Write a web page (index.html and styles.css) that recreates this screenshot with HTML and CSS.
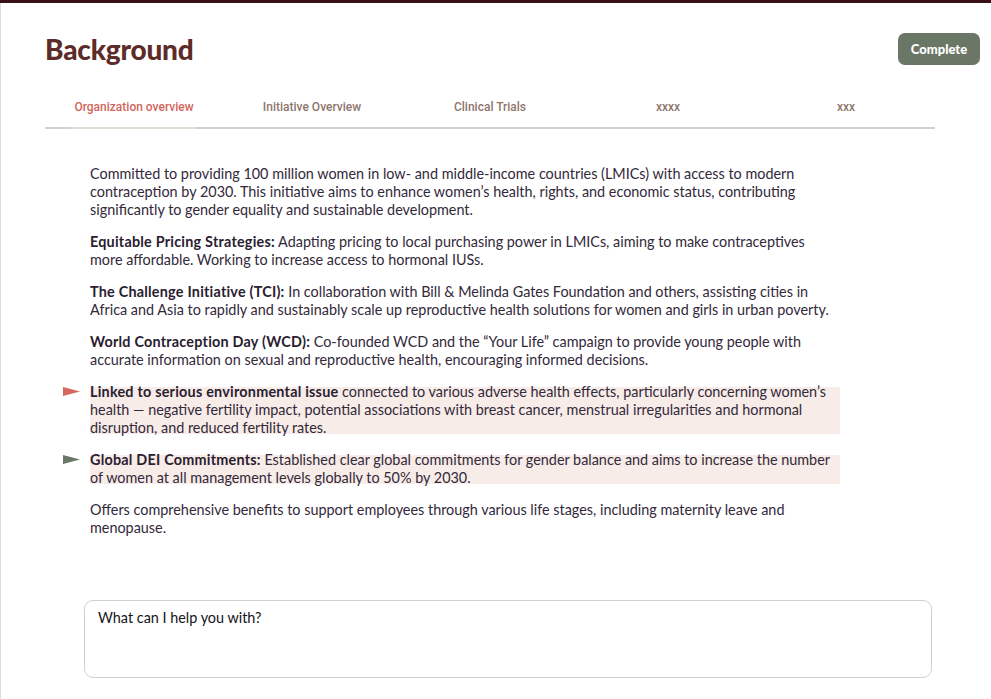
FILE: index.html
```html
<!DOCTYPE html>
<html lang="en">
<head>
<meta charset="utf-8">
<title>Background</title>
<link rel="stylesheet" href="styles.css">
</head>
<body>
<div class="page">
  <header class="header">
    <h1 class="title">Background</h1>
    <button class="complete-btn" type="button">Complete</button>
  </header>

  <nav class="tabs">
    <div class="tab"><span class="tab-label active">Organization overview</span></div>
    <div class="tab"><span class="tab-label">Initiative Overview</span></div>
    <div class="tab"><span class="tab-label">Clinical Trials</span></div>
    <div class="tab"><span class="tab-label">xxxx</span></div>
    <div class="tab"><span class="tab-label">xxx</span></div>
  </nav>

  <main class="content">
    <div class="item">
      <span class="flag-slot"></span>
      <p class="text">Committed to providing 100 million women in low- and middle-income countries (LMICs) with access to modern contraception by 2030. This initiative aims to enhance women’s health, rights, and economic status, contributing significantly to gender equality and sustainable development.</p>
    </div>
    <div class="item">
      <span class="flag-slot"></span>
      <p class="text"><strong>Equitable Pricing Strategies:</strong> Adapting pricing to local purchasing power in LMICs, aiming to make contraceptives more affordable. Working to increase access to hormonal IUSs.</p>
    </div>
    <div class="item">
      <span class="flag-slot"></span>
      <p class="text"><strong>The Challenge Initiative (TCI):</strong> In collaboration with Bill &amp; Melinda Gates Foundation and others, assisting cities in Africa and Asia to rapidly and sustainably scale up reproductive health solutions for women and girls in urban poverty.</p>
    </div>
    <div class="item">
      <span class="flag-slot"></span>
      <p class="text"><strong>World Contraception Day (WCD):</strong> Co-founded WCD and the “Your Life” campaign to provide young people with accurate information on sexual and reproductive health, encouraging informed decisions.</p>
    </div>
    <div class="item">
      <span class="flag-slot"><svg class="flag" width="17" height="9" viewBox="0 0 17 9"><polygon points="0,0 17,4.5 0,9" fill="#d6675d"/></svg></span>
      <p class="text highlight"><strong>Linked to serious environmental issue</strong> connected to various adverse health effects, particularly concerning women’s health — negative fertility impact, potential associations with breast cancer, menstrual irregularities and hormonal disruption, and reduced fertility rates.</p>
    </div>
    <div class="item">
      <span class="flag-slot"><svg class="flag" width="17" height="9" viewBox="0 0 17 9"><polygon points="0,0 17,4.5 0,9" fill="#6a7667"/></svg></span>
      <p class="text highlight"><strong>Global DEI Commitments:</strong> Established clear global commitments for gender balance and aims to increase the number of women at all management levels globally to 50% by 2030.</p>
    </div>
    <div class="item">
      <span class="flag-slot"></span>
      <p class="text">Offers comprehensive benefits to support employees through various life stages, including maternity leave and menopause.</p>
    </div>
  </main>

  <div class="ask">
    <div class="ask-box">What can I help you with?</div>
  </div>
</div>
</body>
</html>
```

FILE: styles.css
```css
* { box-sizing: border-box; }

html, body {
  margin: 0;
  padding: 0;
  background: #ffffff;
}

body {
  font-family: Lato, "Liberation Sans", sans-serif;
  color: #33293a;
  border-top: 3px solid #3b0f16;
  min-height: 699px;
}

.page {
  min-height: 696px;
  border-left: 1px solid #dcdcdc;
}

.header {
  display: flex;
  justify-content: space-between;
  align-items: flex-start;
  padding: 30px 11px 0 44px;
}

.title {
  margin: 0;
  font-family: Lato, sans-serif;
  font-weight: 900;
  font-size: 28px;
  line-height: 32px;
  color: #5d2c29;
  letter-spacing: -0.2px;
}

.complete-btn {
  width: 82px;
  height: 32px;
  border: none;
  border-radius: 7px;
  background: #6b7766;
  color: #ffffff;
  font-family: Lato, sans-serif;
  font-weight: 900;
  font-size: 13px;
  padding: 0;
}

.tabs {
  display: grid;
  grid-template-columns: repeat(5, 1fr);
  width: 890px;
  margin: 34px 0 0 44px;
  border-bottom: 2px solid #d4cfca;
}

.tab {
  text-align: center;
  font-family: Roboto, sans-serif;
  font-weight: 500;
  font-size: 12px;
  line-height: 16px;
  color: #8e766c;
}

.tab-label {
  display: inline-block;
  padding: 0 3px 12px;
}

.tab-label.active {
  color: #d1665c;
  border-bottom: 2px solid #e4ddd5;
  margin-bottom: -2px;
}

.content {
  padding: 36px 0 0 44px;
}

.item {
  display: grid;
  grid-template-columns: 45px 750px;
  margin-bottom: 14px;
}

.flag-slot {
  display: flex;
  justify-content: flex-end;
  padding: 4px 10px 0 0;
}

.flag {
  display: block;
}

.text {
  margin: 0;
  font-size: 14.4px;
  line-height: 18px;
}

.text strong {
  font-weight: 700;
  color: #2a2030;
  letter-spacing: 0.22px;
}

.highlight {
  background: linear-gradient(#f7ece8, #f7ece8) 0 4px / 100% calc(100% - 7px) no-repeat;
}

.ask {
  padding: 49px 0 0 83px;
}

.ask-box {
  width: 848px;
  height: 78px;
  border: 1px solid #cfcfcf;
  border-radius: 9px;
  padding: 8px 13px;
  font-size: 14.4px;
  line-height: 18px;
  color: #141420;
}
```
